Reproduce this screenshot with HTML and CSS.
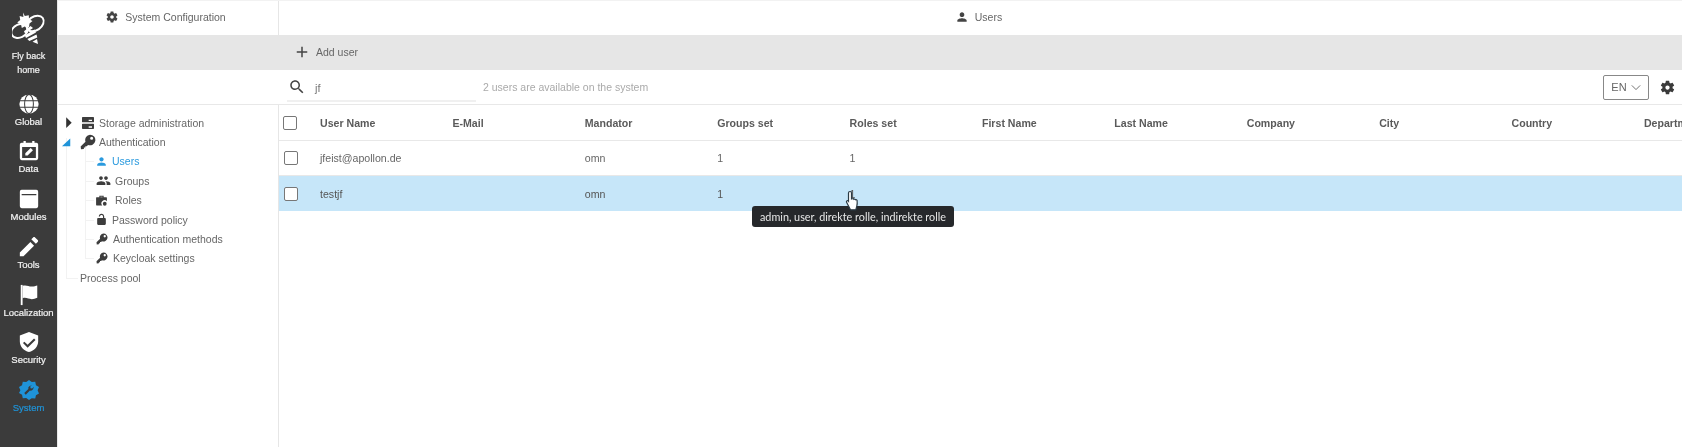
FILE: index.html
```html
<!DOCTYPE html>
<html lang="en">
<head>
<meta charset="utf-8">
<title>Users</title>
<link rel="stylesheet" href="styles.css">
</head>
<body>
<svg class="defs" width="0" height="0" aria-hidden="true">
  <symbol id="i-person" viewBox="0 0 24 24"><path d="M12 12c2.21 0 4-1.79 4-4s-1.79-4-4-4-4 1.79-4 4 1.79 4 4 4zm0 2c-2.67 0-8 1.34-8 4v2h16v-2c0-2.66-5.33-4-8-4z"/></symbol>
  <symbol id="i-group" viewBox="0 0 24 24"><path d="M16 11c1.66 0 2.99-1.34 2.99-3S17.66 5 16 5c-1.66 0-3 1.34-3 3s1.34 3 3 3zm-8 0c1.66 0 2.99-1.34 2.99-3S9.66 5 8 5C6.34 5 5 6.34 5 8s1.34 3 3 3zm0 2c-2.33 0-7 1.17-7 3.5V19h14v-2.5c0-2.33-4.67-3.5-7-3.5zm8 0c-.29 0-.62.02-.97.05 1.16.84 1.97 1.97 1.97 3.45V19h6v-2.5c0-2.33-4.67-3.5-7-3.5z"/></symbol>
  <symbol id="i-gear" viewBox="0 0 24 24"><path d="M19.14 12.94c.04-.3.06-.61.06-.94 0-.32-.02-.64-.07-.94l2.03-1.58c.18-.14.23-.41.12-.61l-1.92-3.32c-.12-.22-.37-.29-.59-.22l-2.39.96c-.5-.38-1.03-.7-1.62-.94l-.36-2.54c-.04-.24-.24-.41-.48-.41h-3.84c-.24 0-.43.17-.47.41l-.36 2.54c-.59.24-1.13.57-1.62.94l-2.39-.96c-.22-.08-.47 0-.59.22L2.74 8.87c-.12.21-.08.47.12.61l2.03 1.58c-.05.3-.09.63-.09.94s.02.64.07.94l-2.03 1.58c-.18.14-.23.41-.12.61l1.92 3.32c.12.22.37.29.59.22l2.39-.96c.5.38 1.03.7 1.62.94l.36 2.54c.05.24.24.41.48.41h3.84c.24 0 .44-.17.47-.41l.36-2.54c.59-.24 1.13-.56 1.62-.94l2.39.96c.22.08.47 0 .59-.22l1.92-3.32c.12-.22.07-.47-.12-.61l-2.01-1.58zM12 15c-1.65 0-3-1.35-3-3s1.35-3 3-3 3 1.35 3 3-1.35 3-3 3z"/></symbol>
  <symbol id="i-key" viewBox="0 0 24 24"><path fill-rule="evenodd" d="M15 1a8 8 0 1 1-3 15.400L10.200 18.200H8v2.200H5.800v2.200L1.500 23 1 18.700l7.200-7.200A8 8 0 0 1 15 1zm2.500 3.200a2.300 2.300 0 1 0 0 4.600 2.300 2.300 0 0 0 0-4.600z"/></symbol>
  <symbol id="i-lock" viewBox="0 0 24 24"><path d="M18 9h-1V6.500C17 3.700 14.800 1.500 12 1.500S7 3.700 7 6.500h2.200c0-1.600 1.200-2.800 2.800-2.800s2.800 1.200 2.800 2.800V9H6c-1.100 0-2 .9-2 2v9c0 1.100.9 2 2 2h12c1.100 0 2-.9 2-2v-9c0-1.100-.9-2-2-2z"/></symbol>
  <symbol id="i-storage" viewBox="0 0 24 24"><path d="M20 13H4c-.55 0-1 .45-1 1v6c0 .55.45 1 1 1h16c.55 0 1-.45 1-1v-6c0-.55-.45-1-1-1zm-2 6h-5v-2h5v2zM20 3H4c-.55 0-1 .45-1 1v6c0 .55.45 1 1 1h16c.55 0 1-.45 1-1V4c0-.55-.45-1-1-1zm-2 6h-5V7h5v2z"/></symbol>
  <symbol id="i-roles" viewBox="0 0 24 24"><path fill-rule="evenodd" d="M8 3h8v3h5a1 1 0 0 1 1 1v6.200a5.500 5.500 0 0 0-8.600 7.800H3a1 1 0 0 1-1-1V7a1 1 0 0 1 1-1h5V3zm2 2v1h4V5h-4z"/><circle cx="18" cy="18" r="3.500"/></symbol>
  <symbol id="i-search" viewBox="0 0 24 24"><path d="M15.500 14h-.79l-.28-.27C15.410 12.590 16 11.110 16 9.500 16 5.910 13.090 3 9.500 3S3 5.910 3 9.500 5.910 16 9.500 16c1.610 0 3.090-.59 4.230-1.570l.27.28v.79l5 4.990L20.490 19l-4.990-5zm-6 0C7.010 14 5 11.990 5 9.500S7.010 5 9.500 5 14 7.010 14 9.500 11.990 14 9.500 14z"/></symbol>
  <symbol id="i-add" viewBox="0 0 24 24"><path d="M19 13h-6v6h-2v-6H5v-2h6V5h2v6h6v2z"/></symbol>
  <symbol id="i-globe" viewBox="0 0 24 24"><circle cx="12" cy="12" r="10.500" fill="#fff"/><g fill="none" stroke="#3b3b3b" stroke-width="1.100"><path d="M1.500 8.500h21M1.500 15.500h21"/><ellipse cx="12" cy="12" rx="4.800" ry="10.500"/></g></symbol>
  <symbol id="i-data" viewBox="0 0 24 24"><path fill-rule="evenodd" d="M6 1h2.500v2h7V1H18v2h2a2 2 0 0 1 2 2v15a2 2 0 0 1-2 2H4a2 2 0 0 1-2-2V5a2 2 0 0 1 2-2h2V1zM4.500 7.500V19.500h15V7.500h-15z"/><path d="M8 17v-2.500l5.800-5.800 2.500 2.500L10.500 17H8z"/></symbol>
  <symbol id="i-modules" viewBox="0 0 24 24"><path fill-rule="evenodd" d="M4 2h16a2 2 0 0 1 2 2v16a2 2 0 0 1-2 2H4a2 2 0 0 1-2-2V4a2 2 0 0 1 2-2zm0 4.500v1.500h16V6.500H4z"/></symbol>
  <symbol id="i-pencil" viewBox="0 0 24 24"><path d="M2 18v4h4L17.500 10.500l-4-4L2 18zM21.500 6.500c.6-.6.6-1.500 0-2.100l-2.900-2.900c-.6-.6-1.500-.6-2.100 0l-2 2 5 5 2-2z"/></symbol>
  <symbol id="i-flag" viewBox="0 0 24 24"><path d="M3 1h2v22H3z"/><path d="M5 2c4-1.500 7 1 10 .8 2.500-.1 4.500-.8 6-1.300V15c-2 1-4 1.500-6 1.500-3.500 0-6-2.300-10-1V2z"/></symbol>
  <symbol id="i-shield" viewBox="0 0 24 24"><path fill-rule="evenodd" d="M12 1l10 4v6.500c0 5.500-4.200 10-10 11.500C6.200 21.500 2 17 2 11.500V5l10-4zm5.500 7.300L10.500 15l-3.500-3.400-1.600 1.600 5.100 5 8.600-8.300-1.600-1.600z"/></symbol>
  <symbol id="i-cog-fill" viewBox="0 0 24 24"><path fill-rule="evenodd" d="M12 1l3 2.400 3.800-.4.800 3.700 3.300 2-1.500 3.500 1.500 3.500-3.300 2-.8 3.700-3.800-.4L12 23l-3-2.400-3.800.4-.8-3.700-3.300-2L2.600 12.300 1.100 8.700l3.300-2 .8-3.700 3.800.4L12 1zm3.500 5.500l-2.800 1a3 3 0 0 0-1.400 3.400L6.800 15.400l1.700 1.700 4.500-4.500a3 3 0 0 0 3.400-1.400l1-2.800-2 2-1.700-.3-.3-1.700 1.100-1.900z"/></symbol>
</svg>

<div class="app">
  <nav class="rail">
    <a class="rail-home">
      <svg class="bee" viewBox="11 12 34 33" fill="none" stroke="#fff" stroke-width="2">
        <ellipse cx="34" cy="23.500" rx="9.500" ry="6.800" transform="rotate(-35 34 23.500)"/>
        <ellipse cx="18.500" cy="31" rx="8.500" ry="6.500" transform="rotate(-25 18.500 31)"/>
        <path fill="#fff" stroke="none" d="M22 12.500l1.800 3.500 4-.8.200 4 3.500 1.800-3 2.500-.5 3.800-3.800-1-3.400 1.800-.8-3.800-3.800-1.800 3-2.500-.6-3.900 3.800.8z"/>
        <path fill="#fff" stroke="none" d="M29.500 26l2.500 2-8 5.500-1-2.300zM33.500 29.500l1.500 3-10 5.500-1.200-2.500zM35.500 34.500l.8 3-8 3.500-2-2zM36 39l1 5-5.500-2.200z"/>
      </svg>
      <span>Fly back<br>home</span>
    </a>
    <a class="rail-item"><svg class="rail-icon"><use href="#i-globe"/></svg><span>Global</span></a>
    <a class="rail-item"><svg class="rail-icon"><use href="#i-data"/></svg><span>Data</span></a>
    <a class="rail-item"><svg class="rail-icon"><use href="#i-modules"/></svg><span>Modules</span></a>
    <a class="rail-item"><svg class="rail-icon"><use href="#i-pencil"/></svg><span>Tools</span></a>
    <a class="rail-item"><svg class="rail-icon"><use href="#i-flag"/></svg><span>Localization</span></a>
    <a class="rail-item"><svg class="rail-icon"><use href="#i-shield"/></svg><span>Security</span></a>
    <a class="rail-item is-active"><svg class="rail-icon"><use href="#i-cog-fill"/></svg><span>System</span></a>
  </nav>

  <main class="workspace">
    <header class="tabs">
      <div class="tab tab-side"><svg class="tab-icon"><use href="#i-gear"/></svg>System Configuration</div>
      <div class="tab tab-main"><svg class="tab-icon"><use href="#i-person"/></svg>Users</div>
    </header>

    <div class="actions">
      <button class="add-btn"><svg class="add-icon"><use href="#i-add"/></svg>Add user</button>
    </div>

    <div class="toolbar">
      <div class="search">
        <svg class="search-icon"><use href="#i-search"/></svg>
        <span class="search-value">jf</span>
      </div>
      <span class="status">2 users are available on the system</span>
      <button class="lang">EN<svg class="chev" viewBox="0 0 12 8"><path d="M1 1.500l5 5 5-5" fill="none" stroke="#666" stroke-width="1.100"/></svg></button>
      <svg class="settings"><use href="#i-gear"/></svg>
    </div>

    <div class="body">
      <aside class="tree">
        <div class="tree-row"><span class="caret caret-closed"></span><svg class="ti ti-lg"><use href="#i-storage"/></svg>Storage administration</div>
        <div class="tree-row"><span class="caret caret-open"></span><svg class="ti ti-lg"><use href="#i-key"/></svg>Authentication</div>
        <div class="tree-children">
          <div class="tree-row leaf is-current"><svg class="ti"><use href="#i-person"/></svg>Users</div>
          <div class="tree-row leaf"><svg class="ti ti-wide"><use href="#i-group"/></svg>Groups</div>
          <div class="tree-row leaf"><svg class="ti ti-roles"><use href="#i-roles"/></svg>Roles</div>
          <div class="tree-row leaf"><svg class="ti"><use href="#i-lock"/></svg>Password policy</div>
          <div class="tree-row leaf"><svg class="ti ti-key"><use href="#i-key"/></svg>Authentication methods</div>
          <div class="tree-row leaf"><svg class="ti ti-key"><use href="#i-key"/></svg>Keycloak settings</div>
        </div>
        <div class="tree-row tree-plain">Process pool</div>
      </aside>

      <section class="table">
        <div class="tr th">
          <div class="cell-check"><span class="check"></span></div>
          <div>User Name</div><div>E-Mail</div><div>Mandator</div><div>Groups set</div><div>Roles set</div><div>First Name</div><div>Last Name</div><div>Company</div><div>City</div><div>Country</div><div>Department</div>
        </div>
        <div class="tr">
          <div class="cell-check"><span class="check"></span></div>
          <div>jfeist@apollon.de</div><div></div><div>omn</div><div>1</div><div>1</div><div></div><div></div><div></div><div></div><div></div><div></div>
        </div>
        <div class="tr is-selected">
          <div class="cell-check"><span class="check"></span></div>
          <div>testjf</div><div></div><div>omn</div><div>1</div><div>1</div><div></div><div></div><div></div><div></div><div></div><div></div>
        </div>
      </section>
    </div>
  </main>
</div>

<div class="tooltip">admin, user, direkte rolle, indirekte rolle</div>
<svg class="cursor" viewBox="0 0 16 22">
  <path d="M5 1.500c1 0 1.500.7 1.500 1.500v6l1-.3c.6-.2 1.200.1 1.400.6.6-.3 1.300-.1 1.600.5.700-.3 1.400 0 1.600.7.200 1.700.2 4-.3 5.700l-1 3.600H5.500L1.700 12.500c-.5-.8-.2-1.500.4-1.800.5-.2 1.100 0 1.400.4V3c0-.8.600-1.500 1.500-1.500z" fill="#fff" stroke="#2b3a44" stroke-width="1.200"/>
</svg>
</body>
</html>
```
FILE: styles.css
```css
* { box-sizing: border-box; }
html, body { margin: 0; height: 100%; overflow: hidden; background: #fff; }
body {
  font-family: "Liberation Sans", Arial, sans-serif;
  font-size: 11px;
  color: #666;
  position: relative;
  filter: blur(0.35px);
}
.defs { position: absolute; }
.app { display: flex; height: 447px; }

/* left rail */
.rail {
  width: 57px;
  flex: none;
  background: #3b3b3b;
  color: #f2f2f2;
  font-size: 9.500px;
  text-align: center;
  display: flex;
  flex-direction: column;
  -webkit-text-stroke: 0.2px currentColor;
}
.rail-home { display: flex; flex-direction: column; align-items: center; padding-top: 12px; height: 92.500px; line-height: 14px; font-size: 9px; }
.bee { width: 34px; height: 33px; margin-bottom: 4px; }
.rail-item { display: flex; flex-direction: column; align-items: center; height: 47.800px; line-height: 12px; }
.rail-icon { width: 22px; height: 22px; fill: #fff; margin-bottom: 1px; }
.rail-item span { white-space: nowrap; }
.is-active { color: #1f93d8; }
.is-active .rail-icon { fill: #1f93d8; }

/* workspace */
.workspace { flex: 1; min-width: 0; display: flex; flex-direction: column; border-left: 1px solid #e9e9e9; }
.tabs { display: grid; grid-template-columns: 220px 1fr; height: 35px; border-top: 1px solid #f2f2f2; }
.tab { display: flex; align-items: center; justify-content: center; font-size: 10.500px; color: #666; padding-bottom: 2px; }
.tab-side { padding-right: 5px; }
.tab-main { border-left: 1px solid #e6e6e6; padding-right: 4px; }
.tab-icon { width: 14px; height: 14px; fill: #444; margin-right: 6px; }
.actions { height: 35px; background: #e6e6e6; padding: 0 0 2px 235px; display: flex; align-items: center; }
.add-btn { display: flex; align-items: center; border: 0; background: none; padding: 0; font: inherit; font-size: 10.500px; color: #666; }
.add-icon { width: 18px; height: 18px; fill: #444; margin-right: 5px; }

.toolbar { height: 35px; display: flex; align-items: center; padding-left: 229px; border-bottom: 1px solid #e8e8e8; }
.search { width: 189px; height: 28px; margin-top: 1px; display: flex; align-items: center; border-bottom: 2px solid #f0f0f0; }
.search-icon { width: 18px; height: 18px; fill: #444; margin-left: 1px; }
.search-value { margin-left: 9px; color: #777; padding-top: 2px; }
.status { margin-left: 7px; color: #aaa; font-size: 10.500px; }
.lang {
  margin-left: auto;
  width: 46px;
  height: 25px;
  display: flex;
  align-items: center;
  justify-content: center;
  gap: 4px;
  background: #fff;
  border: 1px solid #888;
  border-radius: 2px;
  font: inherit;
  font-size: 11px;
  color: #666;
  padding: 0;
}
.chev { width: 10px; height: 7px; }
.settings { width: 17px; height: 17px; fill: #3a3a3a; margin: 0 6px 0 10px; }

.body { flex: 1; display: grid; grid-template-columns: 220px 1fr; min-height: 0; }

/* tree */
.tree { padding: 8px 0 0 3px; position: relative; font-size: 10.500px; color: #666; }
.tree::before { content: ""; position: absolute; left: 8px; top: 33px; height: 140px; border-left: 1px solid #f2f2f2; }
.tree-row { height: 19.400px; display: flex; align-items: center; position: relative; white-space: nowrap; }
.caret { width: 11px; height: 12px; margin-left: 3px; margin-right: 6px; flex: none; }
.caret-closed { background: #333; clip-path: polygon(20% 5%, 70% 50%, 20% 95%); }
.caret-open { background: #1f93d8; margin-left: 1px; margin-right: 8px; clip-path: polygon(75% 20%, 75% 85%, 0 85%); }
.ti { width: 13px; height: 13px; fill: #3d3d3d; margin-right: 4px; flex: none; }
.ti-lg { width: 16px; height: 16px; margin-right: 3px; margin-left: -1px; }
.ti-wide { width: 15px; height: 15px; margin-right: 4px; margin-left: 1px; }
.ti-roles { width: 13px; height: 13px; margin-right: 7px; }
.ti-key { width: 12px; height: 12px; margin-left: 1px; margin-right: 5px; }
.tree-children { position: relative; margin-left: 34px; }
.tree-children::before { content: ""; position: absolute; left: -10px; top: -4px; bottom: 10px; border-left: 1px solid #f2f2f2; }
.leaf::before { content: ""; position: absolute; left: -10px; width: 9px; top: 50%; border-top: 1px solid #f2f2f2; }
.is-current { color: #2a9ade; }
.is-current .ti { fill: #2a9ade; }
.tree-plain { padding-left: 19px; }
.tree-plain::before { content: ""; position: absolute; left: 5px; width: 12px; top: 50%; border-top: 1px solid #f2f2f2; }

/* table */
.table { border-left: 1px solid #e6e6e6; overflow: hidden; font-size: 10.600px; color: #666; }
.tr {
  display: grid;
  grid-template-columns: 41px repeat(11, 132.400px);
  width: 1500px;
  height: 35.200px;
  align-items: center;
  border-bottom: 1px solid #e8e8e8;
  white-space: nowrap;
}
.tr:last-child { border-bottom: 0; }
.th { font-weight: 700; color: #5a5a5a; height: 36px; }
.cell-check { padding-left: 5px; display: flex; }
.th .cell-check { padding-left: 4px; }
.check { width: 14px; height: 14px; background: #fff; border: 1px solid #777; border-radius: 2px; }
.is-selected { background: #c6e6f9; color: #555; }

/* floating */
.tooltip {
  position: absolute;
  left: 752px;
  top: 206px;
  width: 202px;
  height: 21px;
  background: #26282b;
  color: #e8e8e8;
  border-radius: 3px;
  font-family: Lato, sans-serif;
  font-size: 10.800px;
  line-height: 21px;
  text-align: center;
  white-space: nowrap;
}
.cursor { position: absolute; left: 845px; top: 190px; width: 16px; height: 22px; }
```
